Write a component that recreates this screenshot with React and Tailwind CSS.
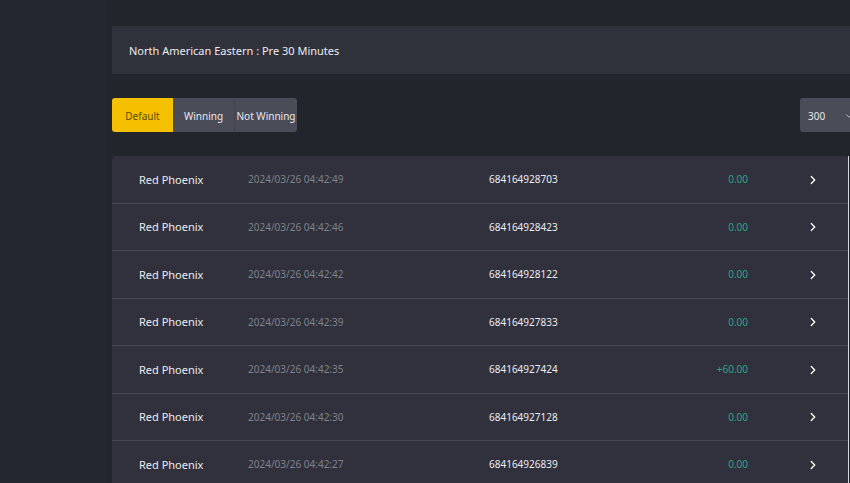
import React from "react";
import { ChevronRight, ChevronDown } from "lucide-react";

const rows = [
  { time: "2024/03/26 04:42:49", id: "684164928703", amount: "0.00" },
  { time: "2024/03/26 04:42:46", id: "684164928423", amount: "0.00" },
  { time: "2024/03/26 04:42:42", id: "684164928122", amount: "0.00" },
  { time: "2024/03/26 04:42:39", id: "684164927833", amount: "0.00" },
  { time: "2024/03/26 04:42:35", id: "684164927424", amount: "+60.00" },
  { time: "2024/03/26 04:42:30", id: "684164927128", amount: "0.00" },
  { time: "2024/03/26 04:42:27", id: "684164926839", amount: "0.00" },
];

const Row = ({ time, id, amount }) => (
  <div className="flex items-center h-[47.5px] pt-[1px] border-b border-[#464852] text-[10px]">
    <span className="w-[136px] shrink-0 pl-[27px] text-[11px] text-[#ececf0]">Red Phoenix</span>
    <span className="w-[241px] shrink-0 text-[#80828b]">{time}</span>
    <span className="w-[150px] shrink-0 text-[#ececf0]">{id}</span>
    <span className="w-[109px] shrink-0 text-right text-[#2aa587]">{amount}</span>
    <span className="flex-1 flex pl-[58px]">
      <ChevronRight size={14} strokeWidth={2.2} className="text-white" />
    </span>
  </div>
);

export default function App() {
  return (
    <div
      className="flex w-[850px] h-[483px] overflow-hidden bg-[#23252d]"
      style={{ fontFamily: '"Noto Sans", "Noto Sans CJK KR", sans-serif' }}
    >
      <div className="w-[107px] shrink-0 bg-[#242730]" />
      <div className="flex-1 pl-[5px] pt-[26px] min-w-0">
        <div className="h-[48px] flex items-center pl-[17px] pt-[2px] bg-[#2f313b] text-[11px] text-[#ececf0] -mr-[10px]">
          North American Eastern : Pre 30 Minutes
        </div>

        <div className="flex items-center justify-between mt-[24px] h-[34px]">
          <div className="flex h-full text-[10px]">
            <button className="w-[61px] h-full pt-[2px] bg-[#f5c000] text-[#5c4b08] rounded-l-[3px]">
              Default
            </button>
            <button className="w-[62px] h-full pt-[2px] bg-[#4a4c58] text-[#e8e8ec] border-r border-[#40424d]">
              Winning
            </button>
            <button className="w-[62px] h-full pt-[2px] bg-[#4a4c58] text-[#e8e8ec] rounded-r-[3px]">
              Not Winning
            </button>
          </div>
          <div className="w-[60px] shrink-0 -mr-[10px] h-full pt-[2px] bg-[#4a4c58] rounded-l-[3px] flex items-center pl-[8px] gap-[19px] text-[10px] text-[#e8e8ec]">
            <span>300</span>
            <ChevronDown size={10} strokeWidth={2} className="text-[#d0d0d8]" />
          </div>
        </div>

        <div className="mt-[24px] flex">
          <div className="w-[736px] bg-[#30313c] rounded-tl-[4px] rounded-tr-[2px]">
            {rows.map((r) => (
              <Row key={r.id} {...r} />
            ))}
          </div>
          <div className="w-[1px] bg-[#d8d8e4]" />
        </div>
      </div>
    </div>
  );
}
